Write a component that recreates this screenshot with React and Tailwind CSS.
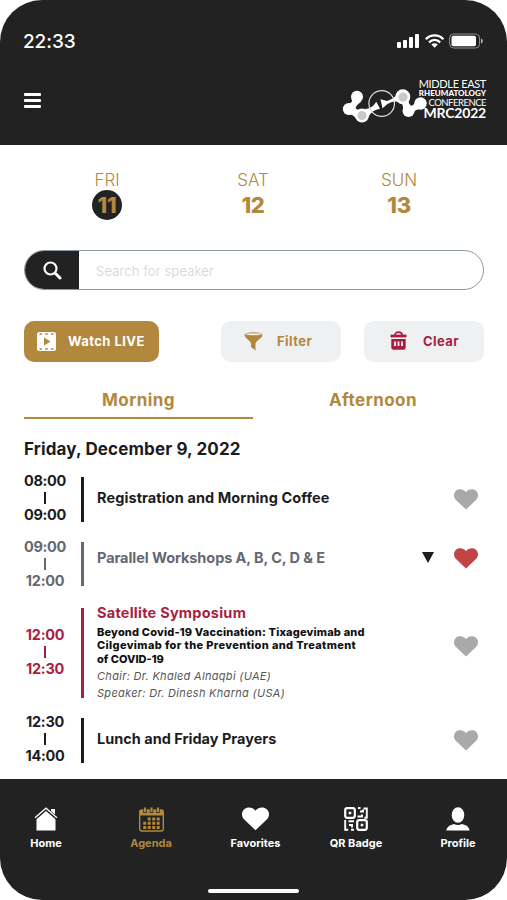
import React, { useState } from 'react';

const days = [
    { name: 'FRI', date: '11' },
    { name: 'SAT', date: '12' },
    { name: 'SUN', date: '13' }
];

const sessions = [
    {
        id: 1,
        start: '08:00',
        end: '09:00',
        title: 'Registration and Morning Coffee',
        titleClass: 'tracking-[0.090px] -mt-[4px]',
        color: 'text-[#1c1c1e]',
        layout: 'h-[45px] mb-5',
        timeClass: '-mt-[4px]'
    },
    {
        id: 2,
        start: '09:00',
        end: '12:00',
        title: 'Parallel Workshops A, B, C, D & E',
        titleClass: 'tracking-[-0.080px] -mt-[14px]',
        color: 'text-[#646872]',
        layout: 'h-[44px] mb-[22px]',
        timeClass: '-mt-px',
        heartClass: '-mt-[11px]',
        expandable: true
    },
    {
        id: 3,
        start: '12:00',
        end: '12:30',
        title: 'Satellite Symposium',
        titleClass: 'tracking-[0.240px]',
        color: 'text-[#a81e40]',
        layout: 'h-[90px] mb-5',
        timeClass: '-mt-[3px]',
        heartClass: '-mt-[14px]',
        topic: [
            { text: 'Beyond Covid-19 Vaccination: Tixagevimab and', className: 'tracking-[0.180px]' },
            { text: 'Cilgevimab for the Prevention and Treatment', className: 'tracking-[0.370px]' },
            { text: 'of COVID-19', className: 'tracking-[0px]' }
        ],
        people: ['Chair: Dr. Khaled Alnaqbi (UAE)', 'Speaker: Dr. Dinesh Kharna (USA)']
    },
    {
        id: 4,
        start: '12:30',
        end: '14:00',
        title: 'Lunch and Friday Prayers',
        titleClass: '-mt-[4px]',
        color: 'text-[#1c1c1e]',
        layout: 'h-[45px]',
        timeClass: '-mt-[4px]'
    }
];

const HeartIcon = ({ className }) => (
    <svg viewBox="0 0 24 21" className={className} fill="currentColor">
        <path d="M12 20.5 2 11C-.8 8.200-.5 3.800 2 1.800 5-.6 9.500 0 12 3.200 14.500 0 19-.6 22 1.800c2.500 2 2.800 6.400 0 9.200z" />
    </svg>
);

const StatusIcons = () => (
    <svg width="87" height="16" viewBox="0 0 87 16" fill="#fff">
        <rect x="0" y="9" width="4" height="6" rx="1" />
        <rect x="6" y="7" width="4" height="8" rx="1" />
        <rect x="12" y="4" width="4" height="11" rx="1" />
        <rect x="18" y="1" width="4" height="14" rx="1" />
        <g fill="none" stroke="#fff" strokeWidth="2.300">
            <path d="M28.800 6.200c5-5 12.600-5 17.600 0" />
            <path d="M32 9.300c3.300-3.100 7.900-3.100 11.200 0" />
        </g>
        <path d="M34.400 11.400c2-1.700 4.400-1.700 6.400 0L37.600 14.700z" />
        <rect x="52.600" y="1" width="30" height="14" rx="4" fill="none" stroke="#919191" />
        <rect x="54.500" y="2.800" width="24.500" height="10.500" rx="1.800" />
        <path d="M84 5.500c2.500.7 2.500 4.300 0 5z" fill="#aaa" />
    </svg>
);

const Logo = () => (
    <div className="flex items-start">
        <svg width="86" height="46" viewBox="0 0 86 46" className="-mt-px">
            <g fill="#fff">
                <circle cx="15" cy="17.700" r="6" />
                <circle cx="6.800" cy="30" r="6" />
                <circle cx="20" cy="36.500" r="7" />
                <circle cx="60.800" cy="17.700" r="7.500" />
                <circle cx="66.500" cy="32" r="6" />
                <circle cx="78.500" cy="24.500" r="6.200" />
                <path d="M9.500 20q2 3-3 5l6 8q0-6 7-10.500z" />
                <path d="M5 35.500q5-1 9 4l3-9q-3 1-6-5z" />
                <path d="M23 30q7 0 11.300-7.200l3.700 7q-8 1-11.500 8.200z" />
                <path d="M38.500 20.300l2 9 5-4.300q6-3.500 12-2l-2-8q-4 5-10.500 7z" />
                <path d="M57 23q5 2 4 8l8-4q-4-4-1-9z" />
                <path d="M65 27q6 1 9-4l5 7q-5-1-10 6z" />
            </g>
            <circle cx="20" cy="36.500" r="4.500" fill="#c9c9c9" />
            <circle cx="61" cy="18.200" r="4.600" fill="#c9c9c9" />
            <circle cx="39.700" cy="24.500" r="12.800" fill="none" stroke="#ddd" strokeWidth="1.200" />
        </svg>
        <div className="flex flex-col items-end w-[68px] -ml-[10px] -mt-px font-['Lato',sans-serif] text-white whitespace-nowrap">
            <span className="text-[11px] leading-[10px] tracking-[-0.350px]">MIDDLE EAST</span>
            <span className="text-[8px] leading-[9px] font-black">RHEUMATOLOGY</span>
            <span className="text-[9.500px] leading-[10px] tracking-[-0.500px]">CONFERENCE</span>
            <span className="text-[14px] leading-[10px] font-bold tracking-[-0.200px]">MRC2022</span>
        </div>
    </div>
);

const FilmIcon = () => (
    <svg width="19" height="19" viewBox="0 0 19 19">
        <rect width="19" height="19" rx="2.500" fill="#fff" />
        <path d="M2.500 2h2.500M8.200 2h2.600M14 2h2.500M2.500 17h2.500M8.200 17h2.600M14 17h2.500" stroke="#b1883d" strokeWidth="1.700" />
        <path d="M7 5.500 13.500 9.500 7 13.500z" fill="#b1883d" />
    </svg>
);

const FunnelIcon = () => (
    <svg width="19" height="19" viewBox="0 0 19 19" fill="#b1883d">
        <ellipse cx="9.500" cy="3" rx="9" ry="2.800" />
        <path d="M.5 3.500C2 7 7 9.500 7 11.500v3.500l4.500 3.500v-7C11.500 9.500 17 7 18.500 3.500z" />
        <ellipse cx="9.500" cy="2.300" rx="7.600" ry="1" fill="#f4eee0" />
    </svg>
);

const TrashIcon = () => (
    <svg width="17" height="19" viewBox="0 0 17 19" fill="none" stroke="#a81e40" className="-mt-[3px]">
        <path d="M5 4C5 .2 12 .2 12 4" strokeWidth="1.700" />
        <path d="M.5 5h16" strokeWidth="2.800" />
        <path d="M2.300 9v7.500q0 1.200 1.200 1.200h10q1.200 0 1.200-1.200V9z" strokeWidth="2" fill="#a81e40" />
        <path d="M5 10.500v4.500M8.500 10.500v4.500M12 10.500v4.500" stroke="#f3dde2" strokeWidth="2" />
    </svg>
);

const HomeIcon = () => (
    <svg width="24" height="24" viewBox="0 0 24 24" fill="#fff">
        <path d="M17 2h4v7l-4-4z" />
        <path d="M2.500 23.500V11.800L12 3.500l9.500 8.300v11.700z" />
        <path d="M.8 11.500 12 1.800l11.200 9.700" fill="none" stroke="#222" strokeWidth="3.200" />
        <path d="M1 10.800 12 1.200l11 9.600" fill="none" stroke="#fff" strokeWidth="1.300" />
    </svg>
);

const CalendarIcon = () => (
    <svg width="25" height="25" viewBox="0 0 25 25" fill="none" stroke="#b1883d">
        <rect x=".7" y="3" width="23.600" height="21" rx="2" strokeWidth="1.400" />
        <path d="M1 3h23v5.500H1z" fill="#b1883d" stroke="none" />
        <path d="M6 0v6M12.500 0v6M19 0v6" stroke="#222" strokeWidth="3.400" />
        <path d="M6 .5v4.800M12.500 .5v4.800M19 .5v4.800" strokeWidth="2.200" />
        <path d="M8.700 12h12.500M4.200 16.200h17M4.200 20.500h17" strokeWidth="3" strokeDasharray="3 1.500" />
    </svg>
);

const QrIcon = () => (
    <svg width="24" height="24" viewBox="0 0 24 24" fill="none" stroke="#fff" strokeWidth="2.200">
        <rect x="1.200" y="1.200" width="9.600" height="9.600" rx="2" />
        <rect x="13.200" y="13.200" width="9.600" height="9.600" rx="2" />
        <path d="M4.700 6h2.600M16.700 18h2.600" strokeWidth="2.600" />
        <path d="M14 1h2.500M16 4.500h3v-2M19.500 1.500h3.300v9.300h-2.500M13.500 9.500h4.500v-2" strokeWidth="1.900" />
        <path d="M1.200 13v9.800h3M4.500 14.200h5.500M5 18h3v2.500M7 22.800h3" strokeWidth="1.900" />
    </svg>
);

const ProfileIcon = () => (
    <svg width="24" height="24" viewBox="0 0 24 24" fill="#fff">
        <ellipse cx="12" cy="8" rx="6.300" ry="7.800" />
        <path d="M.5 23.500c0-3.500 3.500-5.500 7.500-6.500q4 2.200 8 0c4 1 7.500 3 7.500 6.500z" />
    </svg>
);

const navItems = [
    { label: 'Home', icon: <HomeIcon />, width: 'w-[92px]' },
    { label: 'Agenda', icon: <CalendarIcon />, width: 'w-[118px]' },
    { label: 'Favorites', icon: <HeartIcon className="w-[27px] h-[24px]" />, width: 'w-[91px]' },
    { label: 'QR Badge', icon: <QrIcon />, width: 'w-[110px]' },
    { label: 'Profile', icon: <ProfileIcon />, width: 'w-[94px]' }
];

const Header = () => (
    <header className="h-[145px] shrink-0 bg-[#222] text-white pl-6 pr-[21px]">
        <div className="flex items-center justify-between pt-[29px] pr-[2px] h-[53px]">
            <span className="text-[19px] leading-6 font-medium tracking-[-0.100px] -ml-px mt-px">22:33</span>
            <StatusIcons />
        </div>
        <div className="flex justify-between pt-[27px]">
            <button className="flex flex-col gap-[3px] pt-[13px] self-start">
                <span className="w-[17px] h-[3px] bg-white rounded-[1px]" />
                <span className="w-[17px] h-[3px] bg-white rounded-[1px]" />
                <span className="w-[17px] h-[3px] bg-white rounded-[1px]" />
            </button>
            <Logo />
        </div>
    </header>
);

const SessionRow = ({ session, liked, onLike }) => (
    <div className={`flex items-center ${session.layout} ${session.color}`}>
        <div className={`w-[42px] shrink-0 flex flex-col items-center font-bold text-[14.500px] leading-[17px] tracking-[-0.300px] ${session.timeClass}`}>
            <span>{session.start}</span>
            <span className="w-[2px] h-[12px] my-[2.500px] bg-current" />
            <span>{session.end}</span>
        </div>
        <div className="w-[3px] h-full bg-current ml-[15px] mr-[13px] shrink-0" />
        <div className="flex-1 whitespace-nowrap">
            <h3 className={`text-[14.500px] leading-[17px] font-bold ${session.titleClass}`}>{session.title}</h3>
            {session.topic && (
                <div className="text-[11px] leading-[13.500px] font-extrabold text-[#111] mt-[5px]">
                    {session.topic.map(line => (
                        <p key={line.text} className={line.className}>{line.text}</p>
                    ))}
                </div>
            )}
            {session.people && (
                <div className="text-[11px] leading-[17px] italic text-[#555] tracking-[0.310px] mt-[2px]">
                    {session.people.map(person => (
                        <p key={person}>{person}</p>
                    ))}
                </div>
            )}
        </div>
        {session.expandable && (
            <svg width="12" height="11" viewBox="0 0 12 11" className="mr-[20px] -mt-[14px]">
                <path d="M0 0h12L6 11z" fill="#1c1c1e" />
            </svg>
        )}
        <button
            onClick={() => onLike(session.id)}
            className={`${session.heartClass || ''} ${liked ? 'text-[#c24444]' : 'text-[#a9a9a9]'}`}
        >
            <HeartIcon className="w-[24px] h-[21px]" />
        </button>
    </div>
);

const App = () => {
    const [activeDay, setActiveDay] = useState('11');
    const [activeTab, setActiveTab] = useState('Morning');
    const [activeNav, setActiveNav] = useState('Agenda');
    const [favorites, setFavorites] = useState([2]);

    const toggleFavorite = (id) => {
        setFavorites(prev => (prev.includes(id) ? prev.filter(item => item !== id) : [...prev, id]));
    };

    return (
        <div className="bg-white w-[507px] h-[900px]">
            <div className="flex flex-col h-full overflow-hidden rounded-[42px] bg-white font-['Inter',sans-serif]">
                <Header />

                <main className="flex-1 pl-6 pr-[23px]">
                    <div className="flex pt-[25px] pl-[10px] pr-[11px]">
                        {days.map(day => (
                            <button
                                key={day.date}
                                onClick={() => setActiveDay(day.date)}
                                className="w-[146px] flex flex-col items-center text-[#b1883d]"
                            >
                                <span className="text-[17px] leading-5 font-light">{day.name}</span>
                                <span className={`w-[30px] h-[30px] rounded-full flex items-center justify-center text-[22px] leading-none font-extrabold tracking-[-0.300px] ${activeDay === day.date ? 'bg-[#222]' : ''}`}>
                                    {day.date}
                                </span>
                            </button>
                        ))}
                    </div>

                    <div className="flex mt-[30px] h-[40px] rounded-full border border-[#8d98a7] overflow-hidden">
                        <button className="w-[54px] bg-[#222] flex items-center justify-center pl-px">
                            <svg width="19" height="19" viewBox="0 0 19 19" fill="none" stroke="#fff" strokeLinecap="round">
                                <circle cx="7.500" cy="7.500" r="6" strokeWidth="2.200" />
                                <path d="m12.500 12.500 4.500 4.500" strokeWidth="3" />
                            </svg>
                        </button>
                        <input
                            className="flex-1 px-[17px] pt-[3px] text-[13px] font-light tracking-[0.200px] outline-none placeholder:text-[#d2d2d2]"
                            placeholder="Search for speaker"
                        />
                    </div>

                    <div className="flex mt-[31px] h-[41px] text-[13px] font-bold tracking-[0.450px]">
                        <button className="w-[135px] rounded-[10px] bg-[#b1883d] text-white flex items-center pl-[13px] gap-[12px]">
                            <FilmIcon />
                            <span>Watch LIVE</span>
                        </button>
                        <button className="w-[120px] ml-[62px] rounded-[10px] bg-[#eff0f1] text-[#b1883d] flex items-center pl-[23px] gap-[14px]">
                            <FunnelIcon />
                            <span>Filter</span>
                        </button>
                        <button className="w-[120px] ml-[23px] rounded-[10px] bg-[#eff0f1] text-[#a81e40] flex items-center pl-[26px] gap-[16px]">
                            <TrashIcon />
                            <span>Clear</span>
                        </button>
                    </div>

                    <div className="flex mt-[21px]">
                        {['Morning', 'Afternoon'].map(tab => (
                            <button
                                key={tab}
                                onClick={() => setActiveTab(tab)}
                                className={`h-[36px] pt-[2px] border-b-[2px] text-[17px] tracking-[0.450px] font-bold text-[#b1883d] ${tab === 'Morning' ? 'w-[229px]' : 'w-[231px] pl-[9px]'} ${activeTab === tab ? 'border-[#b1883d]' : 'border-transparent'}`}
                            >
                                {tab}
                            </button>
                        ))}
                    </div>

                    <h2 className="mt-[20px] mb-[17px] text-[17px] leading-[21px] font-bold tracking-[0.130px] text-[#1c1c1e]">
                        Friday, December 9, 2022
                    </h2>

                    <div className="pr-[6px]">
                        {sessions.map(session => (
                            <SessionRow
                                key={session.id}
                                session={session}
                                liked={favorites.includes(session.id)}
                                onLike={toggleFavorite}
                            />
                        ))}
                    </div>
                </main>

                <nav className="h-[121px] shrink-0 bg-[#222] flex flex-col items-center justify-between pb-[7px]">
                    <div className="flex w-full pt-[28px]">
                        {navItems.map(item => (
                            <button
                                key={item.label}
                                onClick={() => setActiveNav(item.label)}
                                className={`${item.width} flex flex-col items-center text-[11px] leading-[14px] font-bold ${activeNav === item.label ? 'text-[#b1883d]' : 'text-white'}`}
                            >
                                <span className="h-[25px] mb-[4px]">{item.icon}</span>
                                <span>{item.label}</span>
                            </button>
                        ))}
                    </div>
                    <div className="w-[91px] h-[4px] rounded-full bg-white" />
                </nav>
            </div>
        </div>
    );
};

export default App;
